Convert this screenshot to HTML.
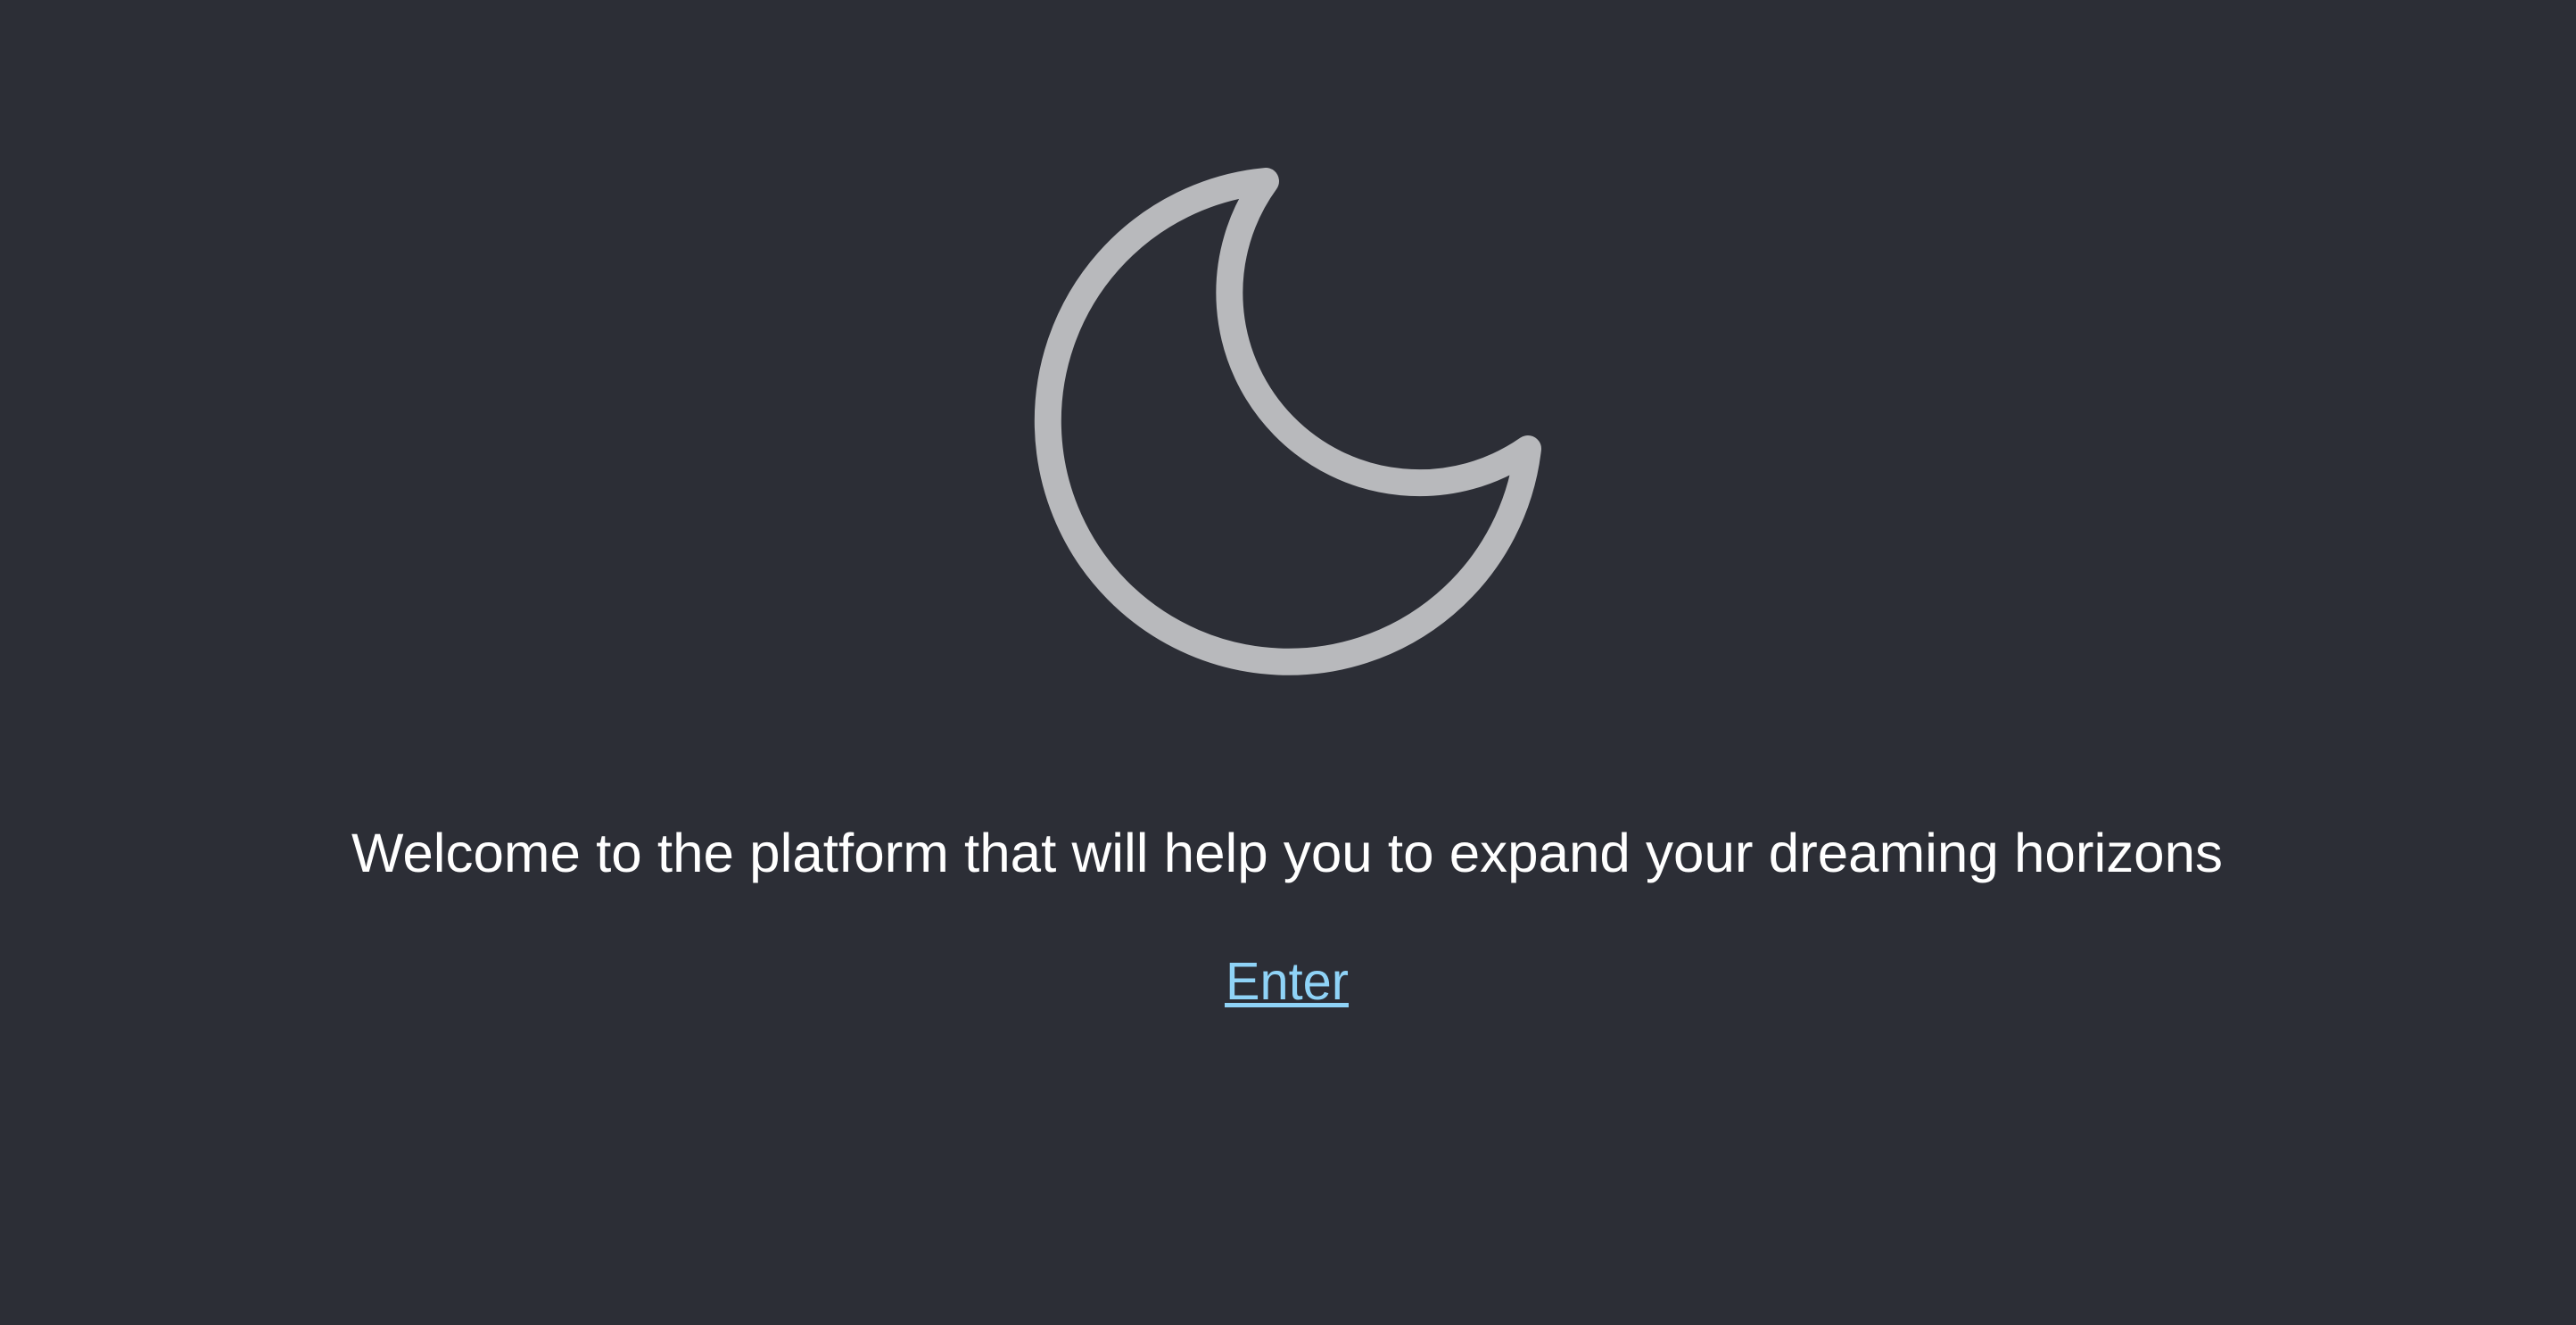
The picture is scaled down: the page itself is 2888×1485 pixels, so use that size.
<!DOCTYPE html>
<html><head><meta charset="utf-8"><style>
html,body{margin:0;padding:0;background:#2c2e36;width:2888px;height:1485px;overflow:hidden}
svg{display:block}
</style></head><body>
<svg width="2888" height="1485" viewBox="0 0 2888 1485" xmlns="http://www.w3.org/2000/svg">
<rect width="2888" height="1485" fill="#2c2e36"/>
<path d="M1419 203 A213 213 0 0 0 1713 503 A270 270 0 1 1 1419 203 Z" fill="none" stroke="#b8b9bc" stroke-width="30" stroke-linejoin="round" stroke-linecap="round"/>
<text x="394" y="977" textLength="2098" lengthAdjust="spacingAndGlyphs" font-family="Liberation Sans, sans-serif" font-size="61" fill="#ffffff">Welcome to the platform that will help you to expand your dreaming horizons</text>
<text x="1374" y="1120" textLength="138" lengthAdjust="spacingAndGlyphs" font-family="Liberation Sans, sans-serif" font-size="59" fill="#8fd3f7">Enter</text>
<rect x="1373" y="1124" width="139" height="5" fill="#8fd3f7"/>
</svg>
</body></html>
